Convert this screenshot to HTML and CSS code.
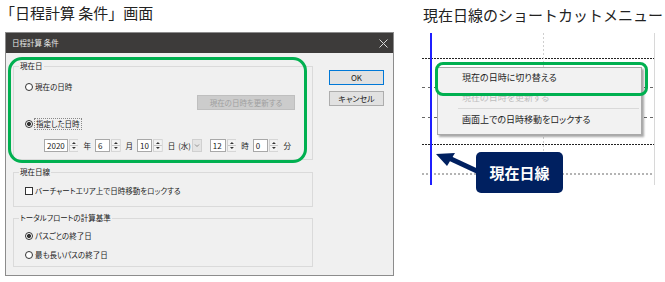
FILE: index.html
```html
<!DOCTYPE html>
<html lang="ja">
<head>
    <meta charset="UTF-8">
    <meta name="viewport" content="width=device-width, initial-scale=1.0">
    <title>日程計算 条件</title>
    <link rel="stylesheet" href="styles.css">
</head>
<body>
    <svg class="defs" width="0" height="0">
        <symbol id="spin" viewBox="0 0 10 13">
            <rect x="0.5" y="0.5" width="9" height="12" fill="#f4f4f4" stroke="#d2d2d2"/>
            <line x1="1" y1="6.5" x2="9" y2="6.5" stroke="#c4c4c4"/>
            <polygon points="3,5 7,5 5,3" fill="#333"/>
            <polygon points="3,8 7,8 5,10" fill="#333"/>
        </symbol>
    </svg>

    <div class="page">
        <div class="col-left">
            <div class="caption">「日程計算 条件」画面</div>
            <div class="dialog">
                <div class="titlebar">
                    <span>日程計算 条件</span>
                    <svg class="close" width="9" height="9" viewBox="0 0 9 9">
                        <path d="M0.5 0.5 L8.5 8.5 M8.5 0.5 L0.5 8.5" stroke="#d8d8d8" stroke-width="1"/>
                    </svg>
                </div>
                <div class="dlg-body">
                    <div class="groups">
                        <fieldset class="group group-date">
                            <legend>現在日</legend>
                            <div class="opt first"><span class="radio"></span>現在の日時</div>
                            <div class="refresh-row"><span class="btn-disabled">現在の日時を更新する</span></div>
                            <div class="opt second"><span class="radio on"></span><span class="focus">指定した日時</span></div>
                            <div class="date-row">
                                <span class="field w-year">2020</span>
                                <svg class="spin"><use href="#spin"/></svg>
                                <span class="unit">年</span>
                                <span class="field w-num">6</span>
                                <svg class="spin"><use href="#spin"/></svg>
                                <span class="unit">月</span>
                                <span class="field w-num">10</span>
                                <svg class="spin"><use href="#spin"/></svg>
                                <span class="unit">日</span>
                                <span class="weekday">(水)</span>
                                <span class="dropdown">
                                    <svg width="10" height="13" viewBox="0 0 10 13">
                                        <polyline points="3,5.5 5,7.5 7,5.5" fill="none" stroke="#777" stroke-width="0.8"/>
                                    </svg>
                                </span>
                                <span class="field w-hour">12</span>
                                <svg class="spin"><use href="#spin"/></svg>
                                <span class="unit">時</span>
                                <span class="field w-num">0</span>
                                <svg class="spin"><use href="#spin"/></svg>
                                <span class="unit">分</span>
                            </div>
                        </fieldset>

                        <fieldset class="group group-line">
                            <legend>現在日線</legend>
                            <div class="opt"><span class="check"></span>バーチャートエリア上で日時移動をロックする</div>
                        </fieldset>

                        <fieldset class="group group-float">
                            <legend>トータルフロートの計算基準</legend>
                            <div class="opt"><span class="radio on"></span>パスごとの終了日</div>
                            <div class="opt"><span class="radio"></span>最も長いパスの終了日</div>
                        </fieldset>
                    </div>
                    <div class="buttons">
                        <div class="btn btn-default">OK</div>
                        <div class="btn">キャンセル</div>
                    </div>
                </div>
                <div class="hl hl-dialog"></div>
            </div>
        </div>

        <div class="col-right">
            <div class="caption">現在日線のショートカットメニュー</div>
            <div class="gantt">
                <div class="g-row row-a"></div>
                <div class="g-row row-b line-dark"></div>
                <div class="g-row row-c line-grey"></div>
                <div class="g-row row-d line-grey"></div>
                <div class="g-row row-e line-dark"></div>
                <div class="g-row row-f line-light"></div>

                <div class="g-vline"></div>
                <div class="today"></div>

                <div class="menu">
                    <div class="menu-item">現在の日時に切り替える</div>
                    <div class="menu-item disabled">現在の日時を更新する</div>
                    <div class="menu-sep"></div>
                    <div class="menu-item">画面上での日時移動をロックする</div>
                </div>
                <div class="hl hl-menu"></div>

                <svg class="arrow" width="60" height="30" viewBox="0 0 60 30">
                    <line x1="55" y1="26" x2="26" y2="12.5" stroke="#002060" stroke-width="5"/>
                    <polygon points="12,8 31,7 23,20" fill="#002060"/>
                </svg>
                <div class="callout">現在日線</div>
            </div>
        </div>
    </div>
</body>
</html>
```

FILE: styles.css
```css
* {
    box-sizing: border-box;
}
body {
    margin: 0;
    background: #fff;
    font-family: "Noto Sans CJK JP", "Noto Sans", sans-serif;
    color: #1a1a1a;
}
.defs {
    position: absolute;
    width: 0;
    height: 0;
    overflow: hidden;
}
.page {
    display: flex;
}
.col-left {
    width: 422px;
}
.caption {
    font-size: 15px;
    line-height: 20px;
    padding-top: 3px;
    color: #222;
    white-space: nowrap;
}
.col-right .caption {
    padding: 5px 0 0 1px;
}

/* dialog */
.dialog {
    position: relative;
    width: 389px;
    margin: 9px 0 0 5px;
    border: 1px solid #8c8c8c;
    background: #f0f0f0;
    font-size: 7.5px;
    line-height: 12px;
    font-feature-settings: "palt";
}
.titlebar {
    display: flex;
    align-items: center;
    justify-content: space-between;
    height: 20px;
    padding: 0 5px 0 6px;
    background: #3d3b3a;
    color: #e6e6e6;
}
.dlg-body {
    display: flex;
    gap: 16px;
    padding: 8px 9px 8px 7px;
}
.groups {
    width: 300px;
}
.group {
    margin: 0;
    min-width: 0;
    border: 1px solid #dadada;
    padding: 0 11px 7px;
}
.group legend {
    padding: 0 1px;
    margin-left: -6px;
    line-height: 10px;
}
.group-date {
    padding-right: 17px;
}
.group-line {
    margin-top: 7px;
    padding-bottom: 9px;
}
.group-float {
    margin-top: 6px;
    padding-bottom: 5px;
}
.opt {
    display: flex;
    align-items: center;
    height: 12px;
    white-space: nowrap;
}
.opt.first {
    margin-top: 10px;
}
.opt.second {
    margin-top: 8px;
}
.group-line .opt {
    margin-top: 8px;
}
.group-float .opt {
    margin-top: 7px;
}
.radio {
    width: 8px;
    height: 8px;
    margin-right: 2px;
    border: 1px solid #333;
    border-radius: 50%;
    background: #fff;
}
.radio.on {
    background: radial-gradient(circle, #333 0 1.8px, #fff 2.3px);
}
.check {
    width: 8px;
    height: 8px;
    margin-right: 2px;
    border: 1px solid #333;
    background: #fff;
}
.focus {
    display: flex;
    align-items: center;
    height: 12px;
    padding: 0 1px;
    margin-left: -1px;
    border: 1px dotted #888;
    line-height: 10px;
}
.refresh-row {
    display: flex;
    justify-content: flex-end;
    margin-top: 2px;
}
.btn-disabled {
    display: flex;
    align-items: center;
    justify-content: center;
    width: 98px;
    height: 15px;
    background: #cccccc;
    border: 1px solid #bfbfbf;
    color: #a0a0a0;
}
.date-row {
    display: flex;
    align-items: center;
    height: 13px;
    margin: 9px 0 0 19px;
    white-space: nowrap;
}
.field {
    height: 13px;
    padding-left: 2px;
    border: 1px solid #a8a8a8;
    background: #fff;
    font-size: 8px;
    line-height: 11px;
}
.w-year {
    width: 24px;
}
.w-num {
    width: 15px;
}
.w-hour {
    width: 16px;
}
.spin {
    width: 10px;
    height: 13px;
    margin-left: 1px;
}
.unit {
    margin: 0 4px 0 5px;
}
.weekday {
    margin-left: -1px;
}
.dropdown {
    display: flex;
    width: 10px;
    height: 13px;
    margin: 0 8px 0 1px;
    background: #e4e4e4;
    border: 1px solid #d0d0d0;
}
.dropdown svg {
    margin: -1px;
}
.buttons {
    display: flex;
    flex-direction: column;
    gap: 6px;
    margin-top: 9px;
}
.btn {
    display: flex;
    align-items: center;
    justify-content: center;
    width: 55px;
    height: 15px;
    background: #e1e1e1;
    border: 1px solid #adadad;
    font-size: 8px;
}
.btn-default {
    border-color: #0078d7;
}

/* green highlights */
.hl {
    position: absolute;
    border: 3px solid #00b050;
    pointer-events: none;
}
.hl-dialog {
    left: 2px;
    top: 24px;
    width: 299px;
    height: 106px;
    border-radius: 14px;
}
.hl-menu {
    left: 13px;
    top: 29px;
    width: 213px;
    height: 34px;
    border-radius: 8px;
}

/* gantt snippet */
.gantt {
    position: relative;
    width: 233px;
    height: 152px;
    margin-top: 8px;
    border-right: 1px solid #d8d8d8;
}
.g-row {
    background-repeat: no-repeat;
    background-position: top left;
}
.row-a { height: 25px; }
.row-b { height: 29px; }
.row-c { height: 30px; }
.row-d { height: 27px; }
.row-e { height: 29px; }
.row-f { height: 12px; }
.line-dark {
    background-image: repeating-linear-gradient(90deg, #222 0 2px, transparent 2px 3px);
    background-size: 100% 1px;
}
.line-grey {
    background-image: repeating-linear-gradient(90deg, #666 0 3px, transparent 3px 6px);
    background-size: 100% 1px;
}
.line-light {
    background-image: repeating-linear-gradient(90deg, #b4b4b4 0 2px, transparent 2px 4px);
    background-size: 100% 2px;
}
.g-vline {
    position: absolute;
    left: 121px;
    top: 0;
    width: 1px;
    height: 152px;
    background: repeating-linear-gradient(180deg, #cfcfcf 0 2px, transparent 2px 4px);
}
.today {
    position: absolute;
    left: 8px;
    top: 0;
    width: 2px;
    height: 152px;
    background: #1f1fff;
}
.menu {
    position: absolute;
    left: 15px;
    top: 34px;
    width: 205px;
    height: 68px;
    background: #f2f2f2;
    border: 1px solid #a9a9a9;
    box-shadow: 2px 2px 2px rgba(0, 0, 0, 0.35);
    font-size: 9px;
    font-feature-settings: "palt";
}
.menu-item {
    height: 20px;
    line-height: 20px;
    padding-left: 24px;
    color: #222;
    white-space: nowrap;
}
.menu-item.disabled {
    color: #bdbdbd;
}
.menu-sep {
    height: 1px;
    margin: 0 2px 1px 20px;
    background: #d9d9d9;
}
.arrow {
    position: absolute;
    left: 2px;
    top: 113px;
}
.callout {
    position: absolute;
    left: 54px;
    top: 119px;
    width: 87px;
    height: 41px;
    display: flex;
    align-items: center;
    justify-content: center;
    background: #002060;
    border-radius: 5px;
    color: #fff;
    font-size: 15px;
    font-weight: bold;
}
```
